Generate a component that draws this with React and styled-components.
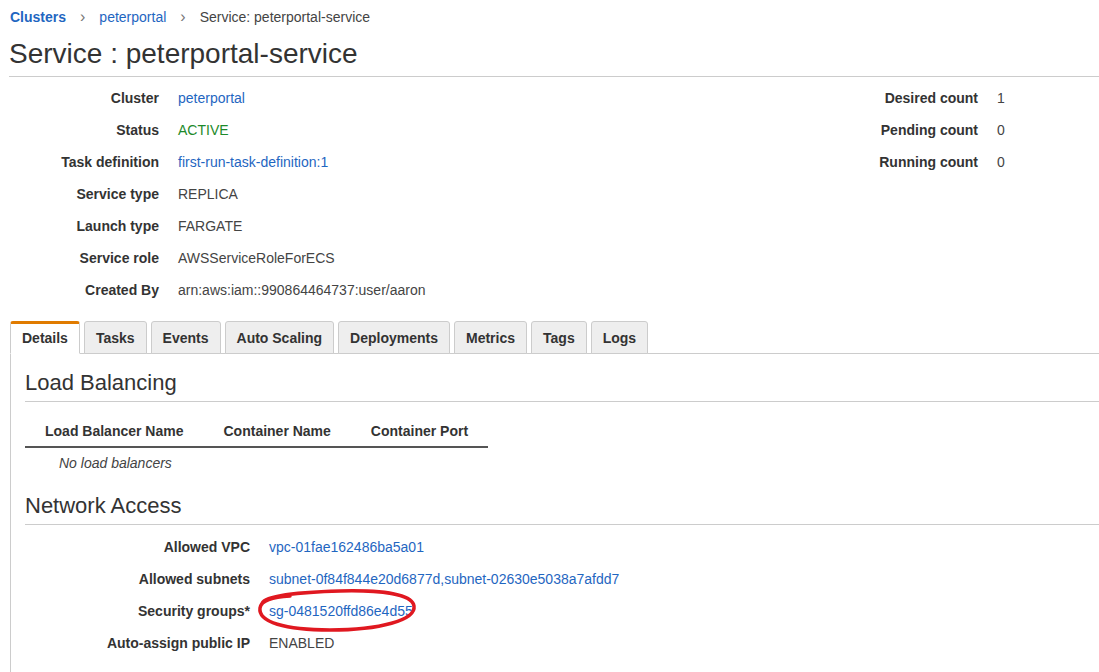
import styled, { createGlobalStyle } from 'styled-components';

const GlobalStyle = createGlobalStyle`
  body {
    margin: 0;
    background: #fff;
    font-family: "Liberation Sans", Arial, sans-serif;
    font-size: 14px;
    color: #444;
  }
`;

const colors = {
  link: '#1f66c1',
  text: '#444',
  label: '#333',
  green: '#1d8a2a',
  border: '#ccc',
  orange: '#e07b00',
};

const Page = styled.div`
  padding: 7px 0 0 9px;
  overflow: hidden;
`;

const Breadcrumb = styled.nav`
  display: flex;
  align-items: center;
  height: 20px;
  line-height: 20px;
  padding-left: 1px;
`;

const Crumb = styled.a`
  color: ${colors.link};
  font-weight: ${(p) => (p.$bold ? 700 : 400)};
  text-decoration: none;
`;

const Sep = styled.span`
  color: #777;
  font-size: 16px;
  margin: 0 14px;
`;

const Current = styled.span`
  color: ${colors.text};
`;

const Title = styled.h1`
  margin: 10px 0 0;
  font-size: 28px;
  line-height: 34px;
  font-weight: 400;
  color: #333;
  padding-bottom: 5px;
  border-bottom: 1px solid ${colors.border};
`;

const Summary = styled.div`
  display: flex;
  justify-content: space-between;
  margin-top: 5px;
`;

const DefList = styled.dl`
  display: grid;
  grid-template-columns: ${(p) => p.$labelWidth}px auto;
  column-gap: 19px;
  align-content: start;
  margin: 0;
  width: ${(p) => (p.$width ? `${p.$width}px` : 'auto')};
`;

const Term = styled.dt`
  text-align: right;
  font-weight: 700;
  color: ${colors.label};
  line-height: 32px;
  white-space: nowrap;
`;

const Value = styled.dd`
  margin: 0;
  line-height: 32px;
  white-space: nowrap;
  position: relative;
  color: ${(p) => (p.$tone === 'link' ? colors.link : p.$tone === 'green' ? colors.green : colors.text)};
`;

const TabBar = styled.div`
  display: flex;
  gap: 4px;
  margin-top: 15px;
  margin-left: 1px;
  border-bottom: 1px solid ${colors.border};
  height: 32px;
`;

const Tab = styled.div`
  box-sizing: border-box;
  height: 33px;
  padding: ${(p) => (p.$active ? '0 11px 2px' : '0 11px')};
  display: flex;
  align-items: center;
  font-weight: 700;
  color: #333;
  border: 1px solid ${colors.border};
  border-radius: 3px 3px 0 0;
  background: ${(p) => (p.$active ? '#fff' : '#eee')};
  border-top: ${(p) => (p.$active ? `3px solid ${colors.orange}` : `1px solid ${colors.border}`)};
  border-bottom: ${(p) => (p.$active ? '1px solid #fff' : `1px solid ${colors.border}`)};
  z-index: ${(p) => (p.$active ? 1 : 0)};
`;

const Panel = styled.div`
  margin-left: 1px;
  border-left: 1px solid ${colors.border};
  padding: 16px 0 40px 14px;
`;

const SectionTitle = styled.h2`
  margin: ${(p) => p.$top || 0}px 0 0;
  font-size: 22px;
  line-height: 26px;
  font-weight: 400;
  color: #333;
  padding-bottom: 5px;
  border-bottom: 1px solid ${colors.border};
`;

const Table = styled.table`
  border-collapse: collapse;
  margin-top: 13px;
`;

const Th = styled.th`
  padding: 0 20px;
  height: 31px;
  text-align: left;
  font-weight: 700;
  color: #333;
  white-space: nowrap;
  border-bottom: 2px solid #555;
`;

const EmptyCell = styled.td`
  padding: 0 0 0 34px;
  height: 29px;
  font-style: italic;
  color: ${colors.text};
`;

const NetworkList = styled(DefList)`
  margin-top: 6px;
`;

const Scribble = styled.svg`
  position: absolute;
  left: -17px;
  top: -9px;
  pointer-events: none;
`;

const tabs = ['Details', 'Tasks', 'Events', 'Auto Scaling', 'Deployments', 'Metrics', 'Tags', 'Logs'];

const serviceInfo = [
  ['Cluster', 'peterportal', 'link'],
  ['Status', 'ACTIVE', 'green'],
  ['Task definition', 'first-run-task-definition:1', 'link'],
  ['Service type', 'REPLICA'],
  ['Launch type', 'FARGATE'],
  ['Service role', 'AWSServiceRoleForECS'],
  ['Created By', 'arn:aws:iam::990864464737:user/aaron'],
];

const counts = [
  ['Desired count', '1'],
  ['Pending count', '0'],
  ['Running count', '0'],
];

function App() {
  return (
    <Page>
      <GlobalStyle />
      <Breadcrumb>
        <Crumb $bold>Clusters</Crumb>
        <Sep>›</Sep>
        <Crumb>peterportal</Crumb>
        <Sep>›</Sep>
        <Current>Service: peterportal-service</Current>
      </Breadcrumb>
      <Title>Service : peterportal-service</Title>

      <Summary>
        <DefList $labelWidth={150}>
          {serviceInfo.map(([label, value, tone]) => (
            <>
              <Term key={label}>{label}</Term>
              <Value key={label + '-v'} $tone={tone}>{value}</Value>
            </>
          ))}
        </DefList>
        <DefList $labelWidth={138} $width={259}>
          {counts.map(([label, value]) => (
            <>
              <Term key={label}>{label}</Term>
              <Value key={label + '-v'}>{value}</Value>
            </>
          ))}
        </DefList>
      </Summary>

      <TabBar>
        {tabs.map((t, i) => (
          <Tab key={t} $active={i === 0}>{t}</Tab>
        ))}
      </TabBar>

      <Panel>
        <SectionTitle>Load Balancing</SectionTitle>
        <Table>
          <thead>
            <tr>
              <Th>Load Balancer Name</Th>
              <Th>Container Name</Th>
              <Th>Container Port</Th>
            </tr>
          </thead>
          <tbody>
            <tr>
              <EmptyCell colSpan={3}>No load balancers</EmptyCell>
            </tr>
          </tbody>
        </Table>

        <SectionTitle $top={16}>Network Access</SectionTitle>
        <NetworkList $labelWidth={225}>
          <Term>Allowed VPC</Term>
          <Value $tone="link">vpc-01fae162486ba5a01</Value>
          <Term>Allowed subnets</Term>
          <Value $tone="link">subnet-0f84f844e20d6877d,subnet-02630e5038a7afdd7</Value>
          <Term>Security groups*</Term>
          <Value $tone="link">
            sg-0481520ffd86e4d55
            <Scribble width="170" height="50" viewBox="0 0 170 50">
              <path
                d="M10 18 C10 10, 48 6, 88 5 C128 4, 160 8, 162 20 C164 34, 128 44, 78 44 C33 44, 6 36, 8 22 C9 14, 23 11, 38 10"
                fill="none"
                stroke="#e01820"
                strokeWidth="3.5"
                strokeLinecap="round"
              />
            </Scribble>
          </Value>
          <Term>Auto-assign public IP</Term>
          <Value>ENABLED</Value>
        </NetworkList>
      </Panel>
    </Page>
  );
}

export default App;
